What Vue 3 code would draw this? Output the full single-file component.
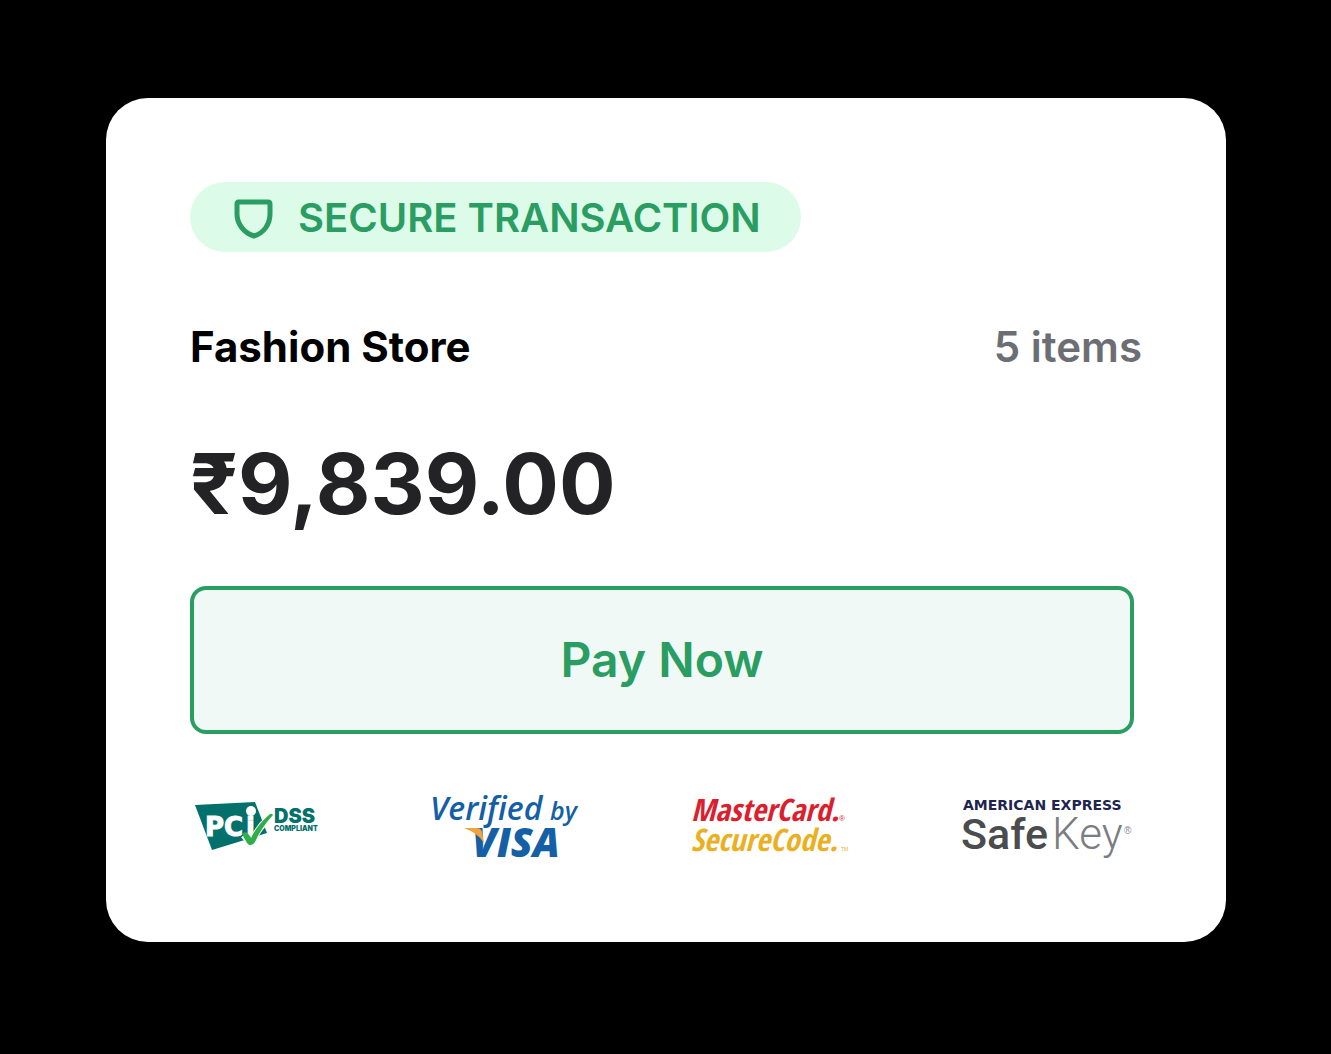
<script setup>
const store = { name: 'Fashion Store', items: 5, total: '₹9,839.00' }
</script>

<template>
  <main class="page">
    <section class="card">
      <div class="badge">
        <svg class="shield" viewBox="0 0 42 42" aria-hidden="true">
          <path d="M6 5H36Q38 5 38 7V17C38 27 32 36 22 39C12 36 5 27 5 17V7Q5 5 7 5Z" />
        </svg>
        <span>SECURE TRANSACTION</span>
      </div>

      <header class="summary">
        <h1 class="name">{{ store.name }}</h1>
        <span class="count">{{ store.items }} items</span>
      </header>

      <p class="total">{{ store.total }}</p>

      <button class="pay" type="button">Pay Now</button>

      <div class="logos">
        <svg class="logo pci" viewBox="0 0 132 74" role="img" aria-label="PCI DSS Compliant">
          <path d="M5 21 65 18 77 49 22 66Z" fill="#04706c" />
          <text class="pci-mark" x="15" y="52">PC<tspan x="56">i</tspan></text>
          <circle cx="61" cy="27" r="5" fill="#fff" />
          <path d="M54 51 61 60Q67 45 79 34" fill="none" stroke="#fff" stroke-width="7" />
          <path d="M52 50Q56 46 59 51L61 54Q67 41 80 30Q82 29 83 31Q71 44 65 58Q61 64 57 59Z" fill="#2fae4a" />
          <text class="pci-dss" x="84" y="39">DSS</text>
          <text class="pci-note" x="84" y="47">COMPLIANT</text>
        </svg>

        <svg class="logo visa" viewBox="0 0 154 74" role="img" aria-label="Verified by Visa">
          <text class="visa-verified" x="2" y="36">Verified</text>
          <text class="visa-by" x="122" y="36">by</text>
          <text class="visa-name" x="44" y="73">VISA</text>
          <path d="M36 44H49Q53 44 54 48L56 59Q50 49 36 44Z" fill="#f2a33a" />
        </svg>

        <svg class="logo mastercard" viewBox="0 0 164 74" role="img" aria-label="MasterCard SecureCode">
          <text class="mc-name" x="3" y="37">MasterCard.</text>
          <text class="mc-code" x="3" y="67">SecureCode.</text>
          <text class="mc-reg" x="151" y="37">®</text>
          <text class="mc-tm" x="153" y="67">TM</text>
        </svg>

        <svg class="logo amex" viewBox="0 0 176 74" role="img" aria-label="American Express SafeKey">
          <text class="amex-name" x="5" y="26">AMERICAN EXPRESS</text>
          <text class="amex-safe" x="3" y="65">Safe</text>
          <text class="amex-key" x="94" y="65">Key</text>
          <text class="amex-reg" x="166" y="50">®</text>
        </svg>
      </div>
    </section>
  </main>
</template>

<style>
body {
  margin: 0;
  background: #000;
}
</style>

<style scoped>
.page {
  box-sizing: border-box;
  min-height: 100vh;
  padding: 98px 105px 98px 106px;
  background: #000;
  font-family: Inter, "Liberation Sans", sans-serif;
}

.card {
  box-sizing: border-box;
  max-width: 1120px;
  margin: 0 auto;
  padding: 84px;
  border-radius: 42px;
  background: #fff;
}

.badge {
  display: flex;
  align-items: center;
  gap: 24px;
  box-sizing: border-box;
  width: fit-content;
  height: 70px;
  padding: 2px 40px 0 42px;
  border-radius: 35px;
  background: #dcfbe9;
  color: #2a9d62;
  font-size: 40px;
  font-weight: 600;
  line-height: 52px;
  white-space: nowrap;
}

.shield {
  width: 42px;
  height: 42px;
  fill: none;
  stroke: currentColor;
  stroke-width: 5;
  stroke-linejoin: round;
}

.summary {
  display: flex;
  justify-content: space-between;
  margin-top: 69px;
  font-size: 42px;
  line-height: 52px;
}

.name {
  margin: 0;
  color: #000;
  font-size: inherit;
  font-weight: 700;
}

.count {
  color: #6d6e74;
  font-weight: 600;
}

.total {
  margin: 59px 0 50px;
  color: #232325;
  font-size: 84px;
  font-weight: 700;
  line-height: 104px;
}

.pay {
  display: block;
  box-sizing: border-box;
  width: calc(100% - 8px);
  height: 148px;
  border: 4px solid #2a9d62;
  border-radius: 16px;
  background: #f0f9f5;
  color: #2a9d62;
  font-family: inherit;
  font-size: 48px;
  font-weight: 600;
  line-height: 58px;
  cursor: pointer;
}

.logos {
  display: flex;
  justify-content: space-between;
  margin: 50px 8px 0 0;
}

.logo {
  height: 74px;
  overflow: visible;
}

.pci { width: 132px; }
.visa { width: 154px; }
.mastercard { width: 164px; }
.amex { width: 176px; }

.pci-mark {
  fill: #fff;
  stroke: #fff;
  stroke-width: 1;
  font: 700 26px "DejaVu Sans", sans-serif;
}

.pci-dss {
  fill: #04706c;
  font: 900 20px Inter, sans-serif;
}

.pci-note {
  fill: #04706c;
  font: 900 7px Inter, sans-serif;
}

.visa-verified {
  fill: #145fa5;
  font: italic 600 32px "Open Sans", sans-serif;
}

.visa-by {
  fill: #145fa5;
  font: italic 600 25px "Open Sans", sans-serif;
}

.visa-name {
  fill: #145fa5;
  font: italic 800 40px "Open Sans", sans-serif;
}

.mc-name,
.mc-code {
  font: italic 700 31px "Open Sans Condensed", "Open Sans", sans-serif;
}

.mc-name {
  fill: #db1f2e;
}

.mc-code {
  fill: #ebb022;
}

.mc-reg {
  fill: #db1f2e;
  font: 400 8px "Liberation Sans", sans-serif;
}

.mc-tm {
  fill: #ebb022;
  font: 400 5px "Liberation Sans", sans-serif;
}

.amex-name {
  fill: #20254f;
  font: 700 14px "DejaVu Sans", sans-serif;
}

.amex-safe {
  fill: #4a4c4d;
  font: 500 43px Roboto, sans-serif;
}

.amex-key {
  fill: #7c7d80;
  font: 300 44px Roboto, sans-serif;
}

.amex-reg {
  fill: #88898b;
  font: 400 10px "Liberation Sans", sans-serif;
}
</style>
